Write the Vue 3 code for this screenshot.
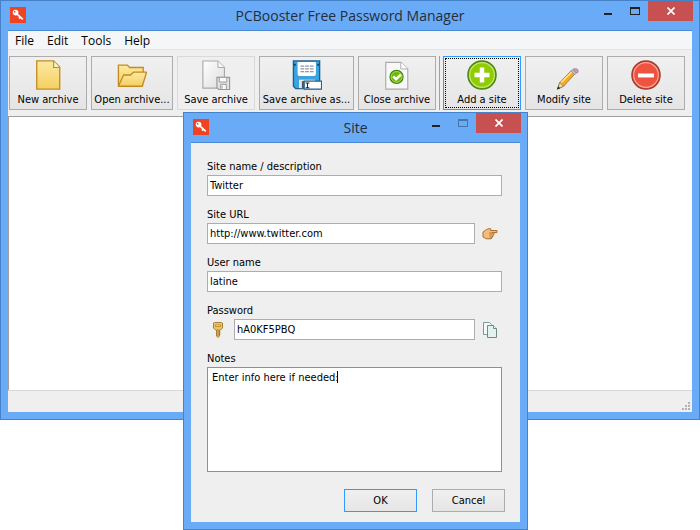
<template>
  <div class="desktop">
    <main class="window">
      <header class="titlebar">
        <svg class="app-icon" viewBox="0 0 16 16" aria-hidden="true">
          <rect width="16" height="16" fill="#ef4323" />
          <circle cx="5.6" cy="5.6" r="2.800" fill="#fff" />
          <circle cx="4.7" cy="4.8" r="0.9" fill="#ef4323" />
          <path d="M7.4 7.4l5.4 5M10.4 10.2l-1.4 1.3" stroke="#fff" stroke-width="1.8" />
        </svg>
        <h1 class="title">PCBooster Free Password Manager</h1>
        <div class="controls">
          <button type="button" class="control" aria-label="Minimize"><i class="min"></i></button>
          <button type="button" class="control" aria-label="Maximize"><i class="max"></i></button>
          <button type="button" class="control close" aria-label="Close">
            <svg viewBox="0 0 8 8" width="8" height="8"><path d="M.500.500l7 7M7.500.500l-7 7" stroke="#fff" stroke-width="1.7" /></svg>
          </button>
        </div>
      </header>

      <div class="client">
        <nav class="menubar">
          <a v-for="item in menu" :key="item" href="#" class="menu-item">{{ item }}</a>
        </nav>

        <div class="toolbar">
          <template v-for="tool in tools" :key="tool.id">
            <span v-if="tool.id === 'add'" class="separator"></span>
            <button
              type="button"
              class="tool"
              :class="{ active: tool.id === 'add' }"
              :style="{ width: tool.width + 'px' }"
              :disabled="tool.disabled"
            >
              <svg class="tool-icon" viewBox="0 0 32 32" aria-hidden="true">
                <defs>
                  <linearGradient id="yellow" x1="0" y1="0" x2="0" y2="1">
                    <stop offset="0" stop-color="#fbeaa2" />
                    <stop offset="1" stop-color="#f5cf60" />
                  </linearGradient>
                  <linearGradient id="gray" x1="0" y1="0" x2="1" y2="1">
                    <stop offset="0" stop-color="#fff" />
                    <stop offset="1" stop-color="#dcdcdc" />
                  </linearGradient>
                </defs>
                <template v-if="tool.id === 'new'">
                  <path d="M4 1h18l6.500 6.500V31H4z" fill="url(#yellow)" stroke="#c48a20" stroke-width="1.400" />
                  <path d="M22 1v7h6.500" fill="#fdf2c0" stroke="#c48a20" stroke-width="1.200" />
                </template>
                <template v-else-if="tool.id === 'open'">
                  <path d="M1.500 27.500V5.500h9.500l2.500 2.500h14.500v5" fill="url(#yellow)" stroke="#c48a20" stroke-width="1.400" />
                  <path d="M1.500 28l5.500-12h7.500l3-3h14l-4.500 15z" fill="url(#yellow)" stroke="#c48a20" stroke-width="1.400" stroke-linejoin="round" />
                </template>
                <template v-else-if="tool.id === 'save'">
                  <path d="M2 1h16l7 7V30H2z" fill="url(#gray)" stroke="#a9a9a9" stroke-width="1.200" />
                  <path d="M18 1v7h7" fill="#f6f6f6" stroke="#a9a9a9" />
                  <path d="M17 18.500h13.500v13H19l-2-2z" fill="#e2e2e2" stroke="#979797" stroke-width="1.200" />
                  <path d="M19.500 18.500h8v5h-8zM21 31v-5h6v5M22.500 27.500v3" fill="#fafafa" stroke="#979797" />
                </template>
                <template v-else-if="tool.id === 'saveas'">
                  <path d="M1.500 1h28v29.500H4l-2.500-2.500z" fill="#3ba3e0" stroke="#16628f" stroke-width="1.400" />
                  <path d="M6 2h19.500v13a2 2 0 0 1-2 2H8a2 2 0 0 1-2-2z" fill="#fff" />
                  <path d="M9 6.500h14M9 9.500h14M9 12.500h14" stroke="#69748b" stroke-dasharray="4 1" />
                  <path d="M3 4v2M28 4v2" stroke="#0c456c" stroke-width="2" />
                  <path d="M7.500 30v-9h17v9z" fill="#e4eef3" />
                  <path d="M10.500 22.500h4V30h-4z" fill="#4f5c66" />
                  <path d="M13 22.500h18.500v8.500H13z" fill="#fff" stroke="#22658f" stroke-width="1.300" />
                  <path d="M14.500 24.500h4M14.500 29.500h4M16.500 24.500v5" stroke="#222" stroke-width="1.100" />
                </template>
                <template v-else-if="tool.id === 'close'">
                  <path d="M4 2.500h16l7.500 7V31H4z" fill="#f8f8f8" stroke="#aaa" stroke-width="1.200" />
                  <path d="M20 2.500v7h7.500" fill="#fff" stroke="#aaa" />
                  <circle cx="15.500" cy="18" r="7" fill="#70b90b" stroke="#438208" stroke-width="1.200" />
                  <circle cx="15.500" cy="18" r="5.800" fill="none" stroke="#b9e070" stroke-width="0.800" />
                  <path d="M12 17.500l3 3 5-5" fill="none" stroke="#fff" stroke-width="2.600" />
                </template>
                <template v-else-if="tool.id === 'add'">
                  <circle cx="16" cy="16" r="15" fill="#72b70a" stroke="#4d8510" stroke-width="1.500" />
                  <circle cx="16" cy="16" r="13.200" fill="#8fcc00" stroke="#c5e67a" stroke-width="1.300" />
                  <path d="M16 8v16M8 16h16" stroke="#fff" stroke-width="4.800" />
                </template>
                <template v-else-if="tool.id === 'modify'">
                  <path d="M9 31l2.500-7L24 11l4 3.500L15.500 28z" fill="#f7a92a" stroke="#8c6a2c" stroke-width="0.800" />
                  <path d="M13 24l12-12" stroke="#ffe38a" stroke-width="1.800" />
                  <path d="M9 31l2.500-7 4 4z" fill="#f2dcb4" stroke="#7c6848" stroke-width="0.700" />
                  <path d="M8.500 31.500l1.400-3.400 2 2z" fill="#222" />
                  <path d="M23.500 12l2-2 4 3.500-2.200 2.300z" fill="#b9bec8" stroke="#777" stroke-width="0.500" />
                  <path d="M25.500 10l1-.6h3l1.500 1.300v2.300l-1.500 1z" fill="#cf9bc4" stroke="#94688c" stroke-width="0.700" />
                </template>
                <template v-else>
                  <circle cx="16" cy="16" r="15" fill="#e1432f" stroke="#a73a2a" stroke-width="1.500" />
                  <circle cx="16" cy="16" r="13.200" fill="#ee5340" stroke="#f8a898" stroke-width="1.300" />
                  <path d="M7.500 16.500h17" stroke="#fff" stroke-width="4.200" />
                </template>
              </svg>
              <span>{{ tool.label }}</span>
            </button>
          </template>
        </div>

        <section class="list"></section>

        <footer class="statusbar">
          <svg class="grip" viewBox="0 0 9 9" fill="#b4b4b4">
            <path d="M6 0h2v2H6zM3 3h2v2H3zM6 3h2v2H6zM0 6h2v2H0zM3 6h2v2H3zM6 6h2v2H6z" />
          </svg>
        </footer>
      </div>
    </main>

    <section class="window dialog" role="dialog" aria-labelledby="dialog-title">
      <header class="titlebar">
        <svg class="app-icon" viewBox="0 0 16 16" aria-hidden="true">
          <rect width="16" height="16" fill="#ef4323" />
          <circle cx="5.6" cy="5.6" r="2.800" fill="#fff" />
          <circle cx="4.7" cy="4.8" r="0.9" fill="#ef4323" />
          <path d="M7.4 7.4l5.4 5M10.4 10.2l-1.4 1.3" stroke="#fff" stroke-width="1.8" />
        </svg>
        <h2 id="dialog-title" class="title">Site</h2>
        <div class="controls">
          <button type="button" class="control" aria-label="Minimize"><i class="min"></i></button>
          <button type="button" class="control" aria-label="Maximize" disabled><i class="max"></i></button>
          <button type="button" class="control close" aria-label="Close">
            <svg viewBox="0 0 8 8" width="8" height="8"><path d="M.500.500l7 7M7.500.500l-7 7" stroke="#fff" stroke-width="1.7" /></svg>
          </button>
        </div>
      </header>

      <form class="client form" @submit.prevent>
        <label for="site-name">Site name / description</label>
        <div class="row">
          <input id="site-name" v-model="site.name" type="text" />
        </div>

        <label for="site-url">Site URL</label>
        <div class="row">
          <input id="site-url" v-model="site.url" type="text" />
          <button type="button" class="icon-button" aria-label="Open site">
            <svg viewBox="0 0 16 16" width="16" height="16">
              <path d="M1 6l3.500-2.500 3-1 1.500.5-.5 1.500h6.500v2h-4.500l1.500.5v1.500l-1 .5v1.500l-1 .5v1l-1 .8H4.500L1 11z" fill="#f0bd7c" stroke="#b0702e" stroke-linejoin="round" />
              <path d="M7 7h4M7.500 9h3M7.500 11h2.500" stroke="#a4622a" stroke-width="0.800" />
            </svg>
          </button>
        </div>

        <label for="user-name">User name</label>
        <div class="row">
          <input id="user-name" v-model="site.user" type="text" />
        </div>

        <label for="password">Password</label>
        <div class="row">
          <button type="button" class="icon-button generate" aria-label="Generate password">
            <svg viewBox="0 0 16 16" width="16" height="16">
              <path d="M3.500 1l1-.5h7l1 .5v5l-2 2h-1v6l-1.500 1.500L6.500 14V8h-1l-2-2z" fill="#edc565" stroke="#ab7f35" />
              <path d="M5.500 3h5v1.500h-5z" fill="#f4efdf" stroke="#a1742c" stroke-width="0.700" />
              <path d="M8 7v7M9.500 10h1M9.500 12h1" stroke="#9a7030" stroke-width="0.900" />
            </svg>
          </button>
          <input id="password" v-model="site.password" type="text" />
          <button type="button" class="icon-button" aria-label="Copy password">
            <svg viewBox="0 0 16 16" width="16" height="16">
              <path d="M1.500.5h6l2 2v10h-8z" fill="#f4fafa" stroke="#7b9896" />
              <path d="M5.500 3.500h6l3 3v9h-9z" fill="#e3f1f1" stroke="#6c8b89" />
              <path d="M11.500 3.500v3h3" fill="#fff" stroke="#6c8b89" />
            </svg>
          </button>
        </div>

        <label for="notes">Notes</label>
        <div class="notes">
          <textarea id="notes" v-model="site.notes"></textarea>
          <span class="caret"></span>
        </div>

        <div class="actions">
          <button type="submit" class="action default">OK</button>
          <button type="button" class="action">Cancel</button>
        </div>
      </form>
    </section>
  </div>
</template>

<script setup>
import { reactive } from 'vue';

const menu = ['File', 'Edit', 'Tools', 'Help'];

const tools = [
  { id: 'new', label: 'New archive', width: 78 },
  { id: 'open', label: 'Open archive...', width: 82 },
  { id: 'save', label: 'Save archive', width: 78, disabled: true },
  { id: 'saveas', label: 'Save archive as...', width: 95 },
  { id: 'close', label: 'Close archive', width: 78 },
  { id: 'add', label: 'Add a site', width: 78 },
  { id: 'modify', label: 'Modify site', width: 78 },
  { id: 'delete', label: 'Delete site', width: 78 },
];

const site = reactive({
  name: 'Twitter',
  url: 'http://www.twitter.com',
  user: 'latine',
  password: 'hA0KF5PBQ',
  notes: 'Enter info here if needed:',
});
</script>

<style>
body {
  margin: 0;
  background: #fff;
}
</style>

<style scoped>
.desktop,
.desktop * {
  box-sizing: border-box;
}

.desktop {
  position: relative;
  min-height: 100vh;
  font-family: 'DejaVu Sans Condensed', sans-serif;
  font-size: 11px;
  line-height: 14px;
  color: #000;
}

button,
input,
textarea {
  margin: 0;
  font: inherit;
  color: inherit;
}

.window {
  padding: 0 7px 7px;
  border: 1px solid #4682c8;
  background: #6aabf7;
}

.titlebar {
  display: grid;
  grid-template-columns: 1fr auto 1fr;
  height: 29px;
}

.app-icon {
  width: 16px;
  height: 16px;
  margin: 6px 0 0 2px;
}

.title {
  margin: 5px 0 0;
  font: 400 14px/20px 'Open Sans', sans-serif;
  color: #262d38;
}

.controls {
  display: flex;
  justify-content: flex-end;
  align-items: flex-start;
  margin-right: -1px;
}

.control {
  display: flex;
  align-items: center;
  justify-content: center;
  width: 27px;
  height: 20px;
  padding: 0;
  border: 0;
  background: none;
}

.min {
  width: 8px;
  height: 2px;
  margin-top: 5px;
  background: #222;
}

.max {
  width: 10px;
  height: 8px;
  border: 1px solid #222;
  border-top-width: 2px;
}

.control:disabled .max {
  border-color: #4776ad;
}

.control.close {
  width: 45px;
  background: #c75050;
}

.client {
  border-top: 1px solid #4b8ad8;
  background: #efefef;
}

.menubar {
  display: flex;
  gap: 13px;
  height: 19px;
  padding: 0 7px;
  border-bottom: 1px solid #e4e4e4;
  background: #f5f6f8;
}

.menu-item {
  font: 12px/20px 'Open Sans', sans-serif;
  color: #000;
  text-decoration: none;
}

.toolbar {
  display: flex;
  gap: 4px;
  padding: 6px 1px;
}

.tool {
  display: flex;
  flex: none;
  flex-direction: column;
  align-items: center;
  gap: 3px;
  height: 54px;
  padding: 3px 0 0;
  border: 1px solid #acacac;
  background: linear-gradient(#f0f0f0, #e5e5e5);
  white-space: nowrap;
}

.tool:disabled {
  border-color: #d9d9d9;
  background: #efefef;
}

.tool.active {
  border-color: #3399ff;
  outline: 1px dotted #000;
  outline-offset: -3px;
}

.tool-icon {
  width: 30px;
  height: 30px;
}

.separator {
  width: 1px;
  margin: 0 -1px;
  background: #a0a0a0;
}

.list {
  min-height: 274px;
  border-top: 1px solid #a0a0a0;
  border-left: 1px solid #a0a0a0;
  background: #fff;
}

.statusbar {
  display: flex;
  justify-content: flex-end;
  align-items: flex-end;
  height: 22px;
  padding: 1px;
  border-top: 1px solid #d7d7d7;
}

.grip {
  width: 9px;
  height: 9px;
}

.dialog {
  position: absolute;
  top: 112px;
  left: 183px;
  width: 345px;
}

.form {
  padding: 16px 18px 10px 16px;
}

.form label {
  display: block;
  height: 16px;
  line-height: 16px;
}

.row {
  display: flex;
  align-items: center;
  height: 21px;
  margin-bottom: 11px;
}

input,
textarea {
  border: 1px solid #abadb3;
  border-radius: 0;
  background: #fff;
}

input {
  flex: 1;
  min-width: 0;
  height: 21px;
  padding: 0 2px;
}

.icon-button {
  flex: none;
  width: 27px;
  height: 18px;
  padding: 1px 4px 1px 7px;
  border: 0;
  background: none;
}

.icon-button.generate {
  padding: 1px 8px 1px 3px;
}

.icon-button svg {
  display: block;
}

.notes {
  position: relative;
}

.notes textarea {
  display: block;
  width: 100%;
  height: 105px;
  padding: 3px 4px;
  border: 1px solid #569de5;
  resize: none;
}

.caret {
  position: absolute;
  top: 4px;
  left: 130px;
  width: 1px;
  height: 12px;
  background: #000;
}

.actions {
  display: flex;
  justify-content: flex-end;
  gap: 15px;
  margin: 17px -3px 0 0;
}

.action {
  width: 73px;
  height: 23px;
  padding: 0;
  border: 1px solid #acacac;
  background: linear-gradient(#f0f0f0, #e5e5e5);
}

.action.default {
  border-color: #3399ff;
}
</style>
